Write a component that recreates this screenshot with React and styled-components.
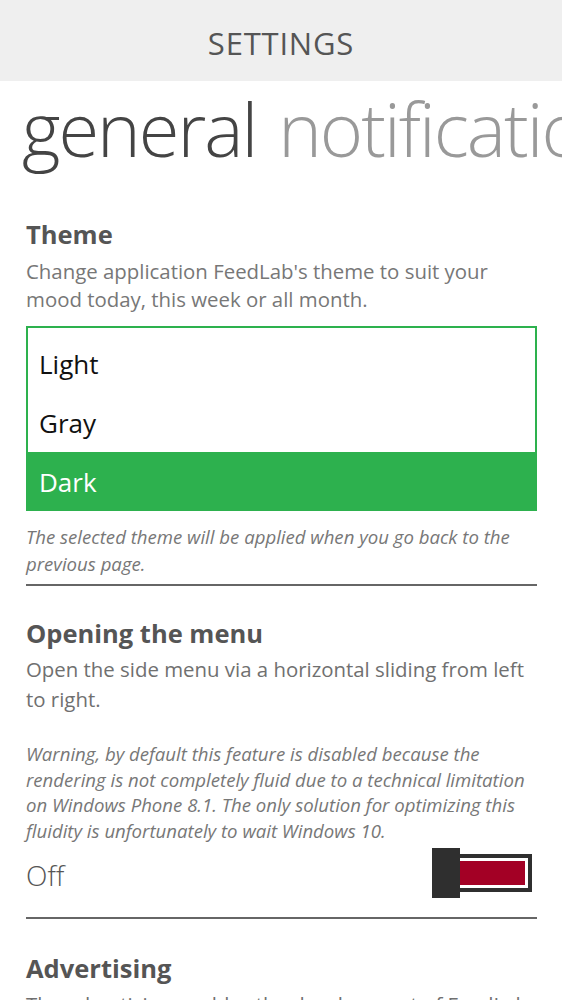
import React from "react";
import styled, { createGlobalStyle } from "styled-components";

const GlobalStyle = createGlobalStyle`
  html, body {
    margin: 0;
    padding: 0;
    background: #ffffff;
    overflow: hidden;
  }
  body {
    font-family: "Open Sans", "Noto Sans", sans-serif;
  }
`;

const Page = styled.div`
  width: 562px;
  height: 1000px;
  overflow: hidden;
  background: #fff;
`;

const TitleBar = styled.header`
  height: 81px;
  background: #efefef;
  display: flex;
  align-items: center;
  justify-content: center;
  padding-top: 4px;
  box-sizing: border-box;
  color: #555;
  font-size: 31px;
  letter-spacing: 0.8px;
`;

const Pivot = styled.nav`
  display: flex;
  gap: 22px;
  white-space: nowrap;
  overflow: hidden;
  padding: 3px 0 0 22px;
  height: 108px;
  box-sizing: border-box;
`;

const PivotItem = styled.span`
  font-size: 74px;
  font-weight: 300;
  letter-spacing: -2px;
  line-height: 90px;
  color: ${(p) => (p.active ? "#444" : "#999")};
`;

const Content = styled.main`
  padding: 0 25px 0 26px;
`;

const Section = styled.section`
  padding: ${(p) => p.top || 28}px 0 ${(p) => p.bottom || 0}px;
  border-bottom: ${(p) => (p.last ? "none" : "2px solid #666")};
`;

const Heading = styled.h2`
  margin: 0;
  font-size: 25.5px;
  font-weight: 700;
  color: #555;
  line-height: 34px;
`;

const Description = styled.p`
  margin: ${(p) => p.top || 4}px 0 0;
  font-size: 20.4px;
  line-height: ${(p) => p.lh || 28}px;
  color: ${(p) => p.color || "#777"};
`;

const Note = styled.p`
  margin: ${(p) => p.top || 12}px 0 0;
  font-size: 18.6px;
  line-height: ${(p) => p.lh || 27}px;
  font-style: italic;
  color: #777;
`;

const ListBox = styled.ul`
  list-style: none;
  margin: 13px 0 0;
  padding: 6px 0 0;
  border: 2px solid #2db14e;
  border-bottom: none;
`;

const ListItem = styled.li`
  height: 59px;
  display: flex;
  align-items: center;
  font-size: 26px;
  color: ${(p) => (p.selected ? "#fff" : "#111")};
  background: ${(p) => (p.selected ? "#2db14e" : "#fff")};
  margin: ${(p) => (p.selected ? "0 -2px" : "0")};
  padding-left: ${(p) => (p.selected ? 13 : 11)}px;
`;

const ToggleRow = styled.div`
  display: flex;
  align-items: center;
  justify-content: space-between;
  height: 60px;
`;

const ToggleLabel = styled.span`
  font-size: 28px;
  font-weight: 300;
  color: #555;
  padding-top: 3px;
`;

const Switch = styled.div`
  display: flex;
  align-items: center;
  margin-right: 5px;
`;

const Thumb = styled.div`
  width: 28px;
  height: 50px;
  background: #2f2f2f;
`;

const Track = styled.div`
  width: 72px;
  height: 38px;
  box-sizing: border-box;
  border: 4px solid #2f2f2f;
  border-left: none;
  padding: 3px 3px 3px 0;
  display: flex;
`;

const TrackFill = styled.div`
  flex: 1;
  background: #a30025;
`;

export default function App() {
  return (
    <Page>
      <GlobalStyle />
      <TitleBar>SETTINGS</TitleBar>
      <Pivot>
        <PivotItem active>general</PivotItem>
        <PivotItem>notifications</PivotItem>
      </Pivot>
      <Content>
        <Section top={28} bottom={7}>
          <Heading>Theme</Heading>
          <Description top={6}>
            Change application FeedLab's theme to suit your mood today, this
            week or all month.
          </Description>
          <ListBox>
            <ListItem>Light</ListItem>
            <ListItem>Gray</ListItem>
            <ListItem selected>Dark</ListItem>
          </ListBox>
          <Note top={12} lh={27}>
            The selected theme will be applied when you go back to the previous
            page.
          </Note>
        </Section>
        <Section top={30} bottom={14}>
          <Heading>Opening the menu</Heading>
          <Description top={4} lh={30} color="#707070">
            Open the side menu via a horizontal sliding from left to right.
          </Description>
          <Note top={27} lh={25.5}>
            Warning, by default this feature is disabled because the rendering
            is not completely fluid due to a technical limitation on Windows
            Phone 8.1. The only solution for optimizing this fluidity is
            unfortunately to wait Windows 10.
          </Note>
          <ToggleRow>
            <ToggleLabel>Off</ToggleLabel>
            <Switch>
              <Thumb />
              <Track>
                <TrackFill />
              </Track>
            </Switch>
          </ToggleRow>
        </Section>
        <Section top={32} last>
          <Heading>Advertising</Heading>
          <Description top={4} lh={30} color="#707070">
            The advertising enables the development of FeedLab by supporting
            the work of its developer.
          </Description>
        </Section>
      </Content>
    </Page>
  );
}
